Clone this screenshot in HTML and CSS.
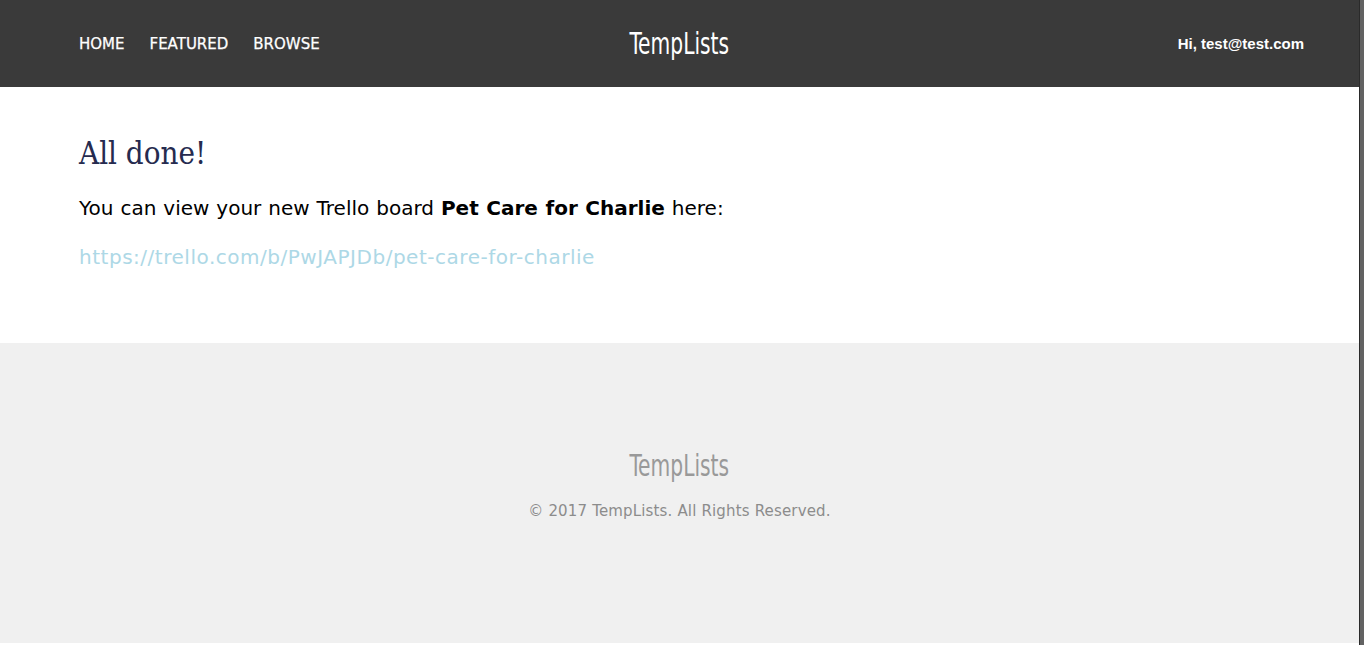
FILE: index.html
```html
<!DOCTYPE html>
<html lang="en">
<head>
<meta charset="utf-8">
<title>TempLists</title>
<link rel="stylesheet" href="styles.css">
</head>
<body>
<div class="page">
  <div class="site">
    <header class="topbar">
      <nav class="nav">
        <a href="#" class="nav-link">HOME</a>
        <a href="#" class="nav-link">FEATURED</a>
        <a href="#" class="nav-link">BROWSE</a>
      </nav>
      <div class="logo"><span class="logo-text">TempLists</span></div>
      <div class="user">Hi, test@test.com</div>
    </header>
    <main class="content">
      <h1 class="title">All done!</h1>
      <p class="message">You can view your new Trello board <strong>Pet Care for Charlie</strong> here:</p>
      <a class="board-link" href="#">https://trello.com/b/PwJAPJDb/pet-care-for-charlie</a>
    </main>
    <footer class="footer">
      <div class="logo footer-logo"><span class="logo-text">TempLists</span></div>
      <div class="copyright">© 2017 TempLists. All Rights Reserved.</div>
    </footer>
  </div>
  <div class="edge"></div>
</div>
</body>
</html>
```

FILE: styles.css
```css
html, body {
  margin: 0;
  padding: 0;
  background: #ffffff;
}

body {
  font-family: "DejaVu Sans", Verdana, sans-serif;
}

.page {
  display: flex;
  width: 1364px;
  height: 645px;
  overflow: hidden;
}

.site {
  flex: 1;
  display: flex;
  flex-direction: column;
}

.edge {
  width: 5px;
  background: #626262;
  border-left: 1px solid #2a2a2a;
  box-sizing: border-box;
}

.topbar {
  height: 87px;
  background: #3a3a3a;
  display: grid;
  grid-template-columns: 1fr auto 1fr;
  align-items: center;
  padding: 0 79px;
}

.nav {
  display: flex;
  gap: 25px;
  padding-top: 1px;
}

.nav-link {
  color: #ffffff;
  text-decoration: none;
  font-family: "DejaVu Sans", Verdana, sans-serif;
  font-size: 15px;
  line-height: 20px;
  -webkit-text-stroke: 0.25px #ffffff;
}

.logo {
  display: flex;
  justify-content: center;
  width: 100px;
  font-family: "DejaVu Sans Condensed", "DejaVu Sans", sans-serif;
  font-stretch: condensed;
  font-size: 30px;
  line-height: 40px;
  color: #ffffff;
}

.logo-text {
  display: inline-block;
  white-space: nowrap;
  transform: scaleX(0.75);
  transform-origin: center;
}

.user {
  justify-self: end;
  margin-right: -24px;
  color: #ffffff;
  font-family: "Liberation Sans", Arial, sans-serif;
  font-weight: bold;
  font-size: 15px;
  line-height: 20px;
  padding-top: 1px;
}

.content {
  padding: 46px 79px 72px;
}

.title {
  margin: 0;
  font-family: "DejaVu Serif Condensed", "DejaVu Serif", serif;
  font-stretch: condensed;
  font-weight: normal;
  font-size: 31px;
  line-height: 40px;
  color: #262b4f;
}

.message {
  margin: 21px 0 0;
  font-size: 20px;
  line-height: 28px;
  word-spacing: 0.6px;
  color: #000000;
}

.message strong {
  font-weight: bold;
}

.board-link {
  display: block;
  margin-top: 21px;
  font-size: 20px;
  line-height: 28px;
  letter-spacing: 0.52px;
  color: #add8e6;
  text-decoration: none;
}

.footer {
  height: 300px;
  background: #f0f0f0;
  display: flex;
  flex-direction: column;
  align-items: center;
  padding-top: 103px;
  box-sizing: border-box;
}

.footer-logo {
  color: #999999;
}

.copyright {
  margin-top: 15px;
  font-size: 15px;
  line-height: 20px;
  letter-spacing: 0.16px;
  color: #8c8c8c;
}
```
